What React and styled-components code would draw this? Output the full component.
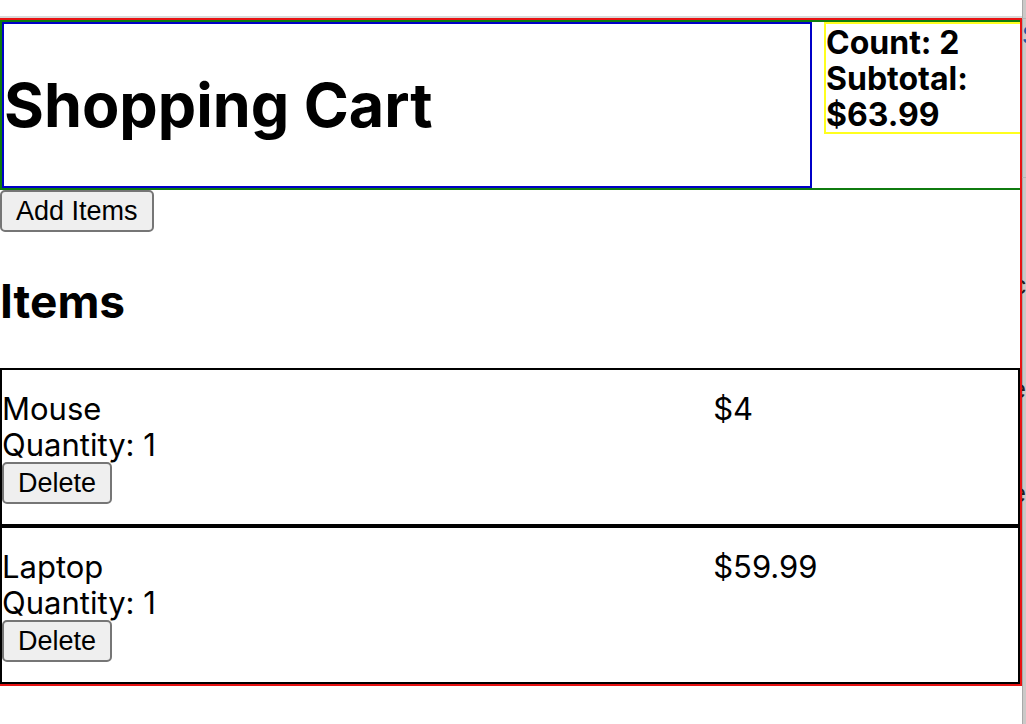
import React from "react";
import styled, { createGlobalStyle } from "styled-components";

const GlobalStyle = createGlobalStyle`
  * { box-sizing: border-box; }
  body {
    margin: 0;
    background: #fff;
    color: #000;
    font: 31px/36px Inter, "Liberation Sans", sans-serif;
  }
`;

const Page = styled.div`
  display: grid;
  grid-template-columns: minmax(0, 1fr) 4px;
  min-height: 100vh;
`;

const Main = styled.main`
  padding-top: 16px;
`;

const Cart = styled.div`
  border: 2px solid #e81313;
  border-left: 0;
`;

const Divider = styled.div`
  height: 2px;
  background: #d9d9d9;
`;

const Header = styled.header`
  display: grid;
  grid-template-columns: minmax(0, 1fr) 196px;
  column-gap: 12px;
  align-items: start;
  border: 2px solid #0f7b0f;
  border-right: 0;
`;

const TitleBox = styled.div`
  border: 2px solid #0000c8;
  padding: 44px 0;
`;

const Title = styled.h1`
  margin: 0;
  font-size: 61px;
  line-height: 74px;
`;

const Summary = styled.div`
  height: 112px;
  padding-top: 1px;
  border: 2px solid #ffff1f;
  border-right: 0;
  font-size: 32px;
  font-weight: 700;
`;

const Button = styled.button`
  display: block;
  height: 42px;
  padding: 0 14px;
  border: 2px solid #767676;
  border-radius: 5px;
  background: #efefef;
  color: #000;
  font: 27px/38px "Liberation Sans", Arial, sans-serif;
`;

const Heading = styled.h2`
  margin: 0;
  padding: 41px 0 39px;
  font-size: 46px;
  line-height: 56px;
`;

const ItemList = styled.ul`
  margin: 0;
  padding: 0;
  list-style: none;
`;

const Item = styled.li`
  display: grid;
  grid-template-columns: 7fr 3fr;
  padding: 21px 0 20px;
  border: 2px solid #000;

  ${Button} {
    margin-top: -1px;
  }
`;

const Strip = styled.aside`
  overflow: hidden;
  box-shadow: inset 1px 0 #a9a9a9;
  background: #cbc9c8;
  font: 26px/32px "Liberation Sans", Arial, sans-serif;
  color: #222;
`;

const StripTop = styled.div`
  height: 18px;
`;

const StripLink = styled.a`
  display: block;
  height: 160px;
  border: 1px solid #b4b4b4;
  border-width: 1px 0;
  color: #1c56a8;
  text-decoration: none;
`;

const StripRows = styled.div`
  display: grid;
  grid-template-columns: minmax(0, 1fr);
  grid-auto-rows: 32px;
  row-gap: 72px;
  padding-top: 91px;
`;

const StripText = styled.span`
  display: flex;
  justify-content: flex-end;
`;

const items = [
  { name: "Mouse", quantity: 1, price: "$4" },
  { name: "Laptop", quantity: 1, price: "$59.99" },
];

export default function App() {
  return (
    <>
      <GlobalStyle />
      <Page>
        <Main>
          <Divider />
          <Cart>
            <Header>
              <TitleBox>
                <Title>Shopping Cart</Title>
              </TitleBox>
              <Summary>
                <div>Count: 2</div>
                <div>Subtotal: $63.99</div>
              </Summary>
            </Header>
            <Button type="button">Add Items</Button>
            <Heading>Items</Heading>
            <ItemList>
              {items.map((item) => (
                <Item key={item.name}>
                  <div>
                    <div>{item.name}</div>
                    <div>Quantity: {item.quantity}</div>
                    <Button type="button">Delete</Button>
                  </div>
                  <div>{item.price}</div>
                </Item>
              ))}
            </ItemList>
          </Cart>
        </Main>
        <Strip>
          <StripTop />
          <StripLink href="#">S</StripLink>
          <StripRows>
            <StripText>c</StripText>
            <StripText>e</StripText>
            <StripText>e</StripText>
          </StripRows>
        </Strip>
      </Page>
    </>
  );
}
